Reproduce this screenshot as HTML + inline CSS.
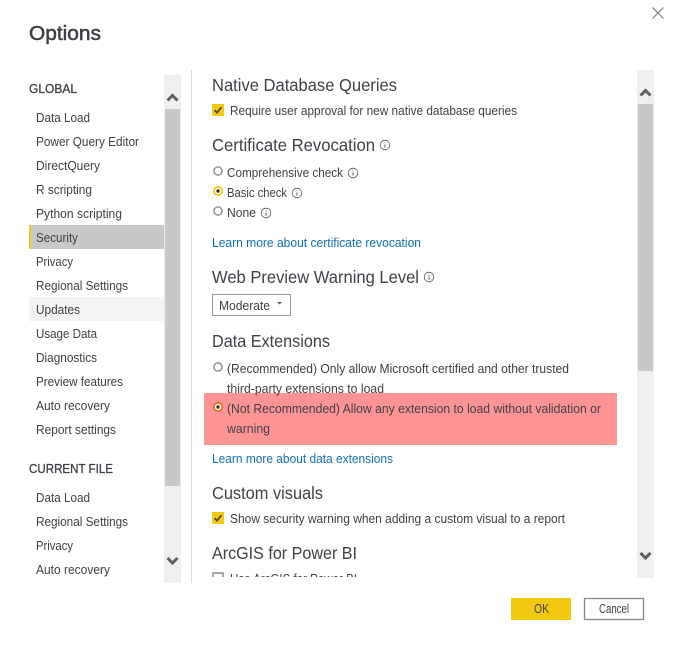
<!DOCTYPE html>
<html><head><meta charset="utf-8"><style>
html,body{margin:0;padding:0;background:#fff;width:674px;height:649px;overflow:hidden}
svg{display:block}
text{font-family:"Liberation Sans",sans-serif;fill:#3f3f46;font-size:12.5px}
.h{font-size:17.5px;fill:#404048}
.l{fill:#1270b8}
.g{font-size:12.5px;stroke:#3f3f46;stroke-width:.3}
</style></head><body>
<svg width="674" height="649" viewBox="0 0 674 649" xmlns="http://www.w3.org/2000/svg">
<defs>
<g id="cb"><rect width="12" height="12" fill="#f2c811"/><path d="M2.7 6.2L5 8.7L9.4 3.3" fill="none" stroke="#333" stroke-width="1.6"/></g>
<g id="ro"><circle r="4.1" fill="#fff" stroke="#909090" stroke-width="1.5"/></g>
<g id="ry"><circle r="4.1" fill="#fff" stroke="#f2c811" stroke-width="1.8"/><circle r="1.7" fill="#333"/></g>
<g id="i"><circle r="4.8" fill="none" stroke="#555" stroke-width=".8"/><path d="M0 -2.6V-1.6M0 -.6V2.6" stroke="#555" stroke-width=".9"/></g>
<clipPath id="c"><rect x="200" y="60" width="430" height="517"/></clipPath>
</defs>
<path d="M652.5 7.5L663.5 18.5M663.5 7.5L652.5 18.5" stroke="#777" stroke-width="1.1" fill="none"/>
<text x="29" y="40" textLength="72" lengthAdjust="spacingAndGlyphs" style="font-size:20.5px;stroke:#3a3a40;stroke-width:.5">Options</text>

<rect x="29" y="225" width="135" height="24" fill="#c8c8c8"/>
<rect x="29" y="225" width="2" height="24" fill="#f2c811"/>
<rect x="29" y="297" width="135" height="24" fill="#f3f3f3"/>
<rect x="164" y="75" width="17" height="508" fill="#efefef"/>
<rect x="165" y="109" width="15" height="377" fill="#c8c8c8"/>
<path d="M167.5 100.500L172.500 95.500L177.500 100.500" fill="none" stroke="#5f5f5f" stroke-width="3"/>
<path d="M167.5 558L172.500 563L177.500 558" fill="none" stroke="#5f5f5f" stroke-width="3"/>
<rect x="191" y="70" width="1" height="513" fill="#dcdcdc"/>

<text class="g" x="29" y="93" textLength="48" lengthAdjust="spacingAndGlyphs">GLOBAL</text>
<text x="36" y="122" textLength="54" lengthAdjust="spacingAndGlyphs">Data Load</text>
<text x="36" y="146" textLength="103" lengthAdjust="spacingAndGlyphs">Power Query Editor</text>
<text x="36" y="170" textLength="64" lengthAdjust="spacingAndGlyphs">DirectQuery</text>
<text x="36" y="194" textLength="56" lengthAdjust="spacingAndGlyphs">R scripting</text>
<text x="36" y="218" textLength="86" lengthAdjust="spacingAndGlyphs">Python scripting</text>
<text x="36" y="242" textLength="42" lengthAdjust="spacingAndGlyphs">Security</text>
<text x="36" y="266" textLength="37" lengthAdjust="spacingAndGlyphs">Privacy</text>
<text x="36" y="290" textLength="92" lengthAdjust="spacingAndGlyphs">Regional Settings</text>
<text x="36" y="314" textLength="44" lengthAdjust="spacingAndGlyphs">Updates</text>
<text x="36" y="338" textLength="61" lengthAdjust="spacingAndGlyphs">Usage Data</text>
<text x="36" y="362" textLength="61" lengthAdjust="spacingAndGlyphs">Diagnostics</text>
<text x="36" y="386" textLength="87" lengthAdjust="spacingAndGlyphs">Preview features</text>
<text x="36" y="410" textLength="74" lengthAdjust="spacingAndGlyphs">Auto recovery</text>
<text x="36" y="434" textLength="80" lengthAdjust="spacingAndGlyphs">Report settings</text>
<text class="g" x="29" y="473" textLength="84" lengthAdjust="spacingAndGlyphs">CURRENT FILE</text>
<text x="36" y="502" textLength="54" lengthAdjust="spacingAndGlyphs">Data Load</text>
<text x="36" y="526" textLength="92" lengthAdjust="spacingAndGlyphs">Regional Settings</text>
<text x="36" y="550" textLength="37" lengthAdjust="spacingAndGlyphs">Privacy</text>
<text x="36" y="574" textLength="74" lengthAdjust="spacingAndGlyphs">Auto recovery</text>

<rect x="204" y="393" width="413" height="52" fill="#ff9494"/>
<g clip-path="url(#c)">
<text class="h" x="212" y="91" textLength="185" lengthAdjust="spacingAndGlyphs">Native Database Queries</text>
<use href="#cb" x="212" y="104"/>
<text x="230" y="115" textLength="287" lengthAdjust="spacingAndGlyphs">Require user approval for new native database queries</text>
<text class="h" x="212" y="151" textLength="163" lengthAdjust="spacingAndGlyphs">Certificate Revocation</text>
<use href="#i" x="385" y="145"/>
<use href="#ro" x="218" y="171"/>
<text x="227" y="177" textLength="116" lengthAdjust="spacingAndGlyphs">Comprehensive check</text>
<use href="#i" x="353" y="173"/>
<use href="#ry" x="218" y="191"/>
<text x="227" y="197" textLength="60" lengthAdjust="spacingAndGlyphs">Basic check</text>
<use href="#i" x="297" y="193"/>
<use href="#ro" x="218" y="211"/>
<text x="227" y="217" textLength="29" lengthAdjust="spacingAndGlyphs">None</text>
<use href="#i" x="266" y="213"/>
<text class="l" x="212" y="247" textLength="209" lengthAdjust="spacingAndGlyphs">Learn more about certificate revocation</text>
<text class="h" x="212" y="283" textLength="207" lengthAdjust="spacingAndGlyphs">Web Preview Warning Level</text>
<use href="#i" x="429" y="277"/>
<rect x="212.500" y="294.500" width="78" height="21" fill="#fff" stroke="#999"/>
<text x="219" y="310" textLength="51" lengthAdjust="spacingAndGlyphs">Moderate</text>
<path d="M277 302H282L279.500 304.500Z" fill="#555"/>
<text class="h" x="212" y="347" textLength="118" lengthAdjust="spacingAndGlyphs">Data Extensions</text>
<use href="#ro" x="218" y="367"/>
<text x="227" y="373" textLength="342" lengthAdjust="spacingAndGlyphs">(Recommended) Only allow Microsoft certified and other trusted</text>
<text x="227" y="393" textLength="157" lengthAdjust="spacingAndGlyphs">third-party extensions to load</text>
<circle cx="218" cy="407" r="4.100" fill="#fff" stroke="#f0711e" stroke-width="1.800"/><circle cx="218" cy="407" r="1.700" fill="#333"/>
<text x="227" y="413" textLength="374" lengthAdjust="spacingAndGlyphs">(Not Recommended) Allow any extension to load without validation or</text>
<text x="227" y="433" textLength="43" lengthAdjust="spacingAndGlyphs">warning</text>
<text class="l" x="212" y="463" textLength="181" lengthAdjust="spacingAndGlyphs">Learn more about data extensions</text>
<text class="h" x="212" y="499" textLength="111" lengthAdjust="spacingAndGlyphs">Custom visuals</text>
<use href="#cb" x="212" y="512"/>
<text x="230" y="523" textLength="335" lengthAdjust="spacingAndGlyphs">Show security warning when adding a custom visual to a report</text>
<text class="h" x="212" y="559" textLength="145" lengthAdjust="spacingAndGlyphs">ArcGIS for Power BI</text>
<rect x="213" y="573" width="10" height="10" fill="#fff" stroke="#8a8a8a" stroke-width="1.500"/>
<text x="230" y="583" textLength="127" lengthAdjust="spacingAndGlyphs">Use ArcGIS for Power BI</text>
</g>

<rect x="637" y="70" width="17" height="508" fill="#efefef"/>
<rect x="638" y="104" width="15" height="267" fill="#c8c8c8"/>
<path d="M640.500 95.500L645.500 90.500L650.500 95.500" fill="none" stroke="#5f5f5f" stroke-width="3"/>
<path d="M640.500 553L645.500 558L650.500 553" fill="none" stroke="#5f5f5f" stroke-width="3"/>

<rect x="511" y="598" width="60" height="22" fill="#f2c811"/>
<text x="534" y="613" textLength="15" lengthAdjust="spacingAndGlyphs" style="font-size:12.5px">OK</text>
<rect x="584.500" y="598.500" width="59" height="21" fill="#fff" stroke="#888" stroke-width="1.300"/>
<text x="599" y="613" textLength="30" lengthAdjust="spacingAndGlyphs" style="font-size:12.5px">Cancel</text>
</svg>
</body></html>
